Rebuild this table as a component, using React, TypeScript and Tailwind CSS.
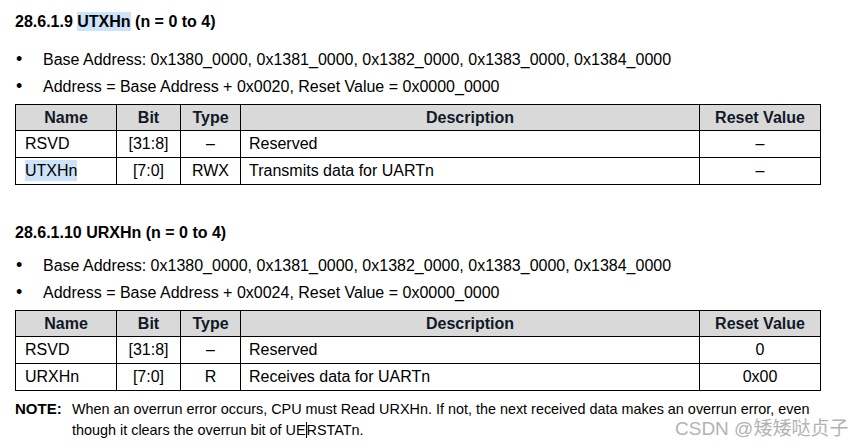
type Row = { name: string; bit: string; type: string; desc: string; reset: string; hl?: boolean };

const utxRows: Row[] = [
  { name: "RSVD", bit: "[31:8]", type: "–", desc: "Reserved", reset: "–" },
  { name: "UTXHn", bit: "[7:0]", type: "RWX", desc: "Transmits data for UARTn", reset: "–", hl: true },
];

const urxRows: Row[] = [
  { name: "RSVD", bit: "[31:8]", type: "–", desc: "Reserved", reset: "0" },
  { name: "URXHn", bit: "[7:0]", type: "R", desc: "Receives data for UARTn", reset: "0x00" },
];

function Bullets({ offset, className }: { offset: string; className: string }) {
  return (
    <ul className={`${className} flex flex-col text-[16px] leading-[27px] text-black`}>
      <li className="flex">
        <span className="w-[28px] pl-[1px] text-[18px]">•</span>
        Base Address: 0x1380_0000, 0x1381_0000, 0x1382_0000, 0x1383_0000, 0x1384_0000
      </li>
      <li className="flex">
        <span className="w-[28px] pl-[1px] text-[18px]">•</span>
        Address = Base Address + {offset}, Reset Value = 0x0000_0000
      </li>
    </ul>
  );
}

function RegTable({ rows }: { rows: Row[] }) {
  const th = "border border-black bg-[#d9d9d9] font-bold text-[#111827] h-[26px] text-center";
  const td = "border border-black h-[27px]";
  return (
    <table className="mt-[4px] w-[805px] border-collapse table-fixed text-[16px] leading-none text-black">
      <colgroup>
        <col className="w-[101px]" />
        <col className="w-[64px]" />
        <col className="w-[60px]" />
        <col className="w-[459px]" />
        <col className="w-[121px]" />
      </colgroup>
      <thead>
        <tr>
          <th className={th}>Name</th>
          <th className={th}>Bit</th>
          <th className={th}>Type</th>
          <th className={th}>Description</th>
          <th className={th}>Reset Value</th>
        </tr>
      </thead>
      <tbody>
        {rows.map((r) => (
          <tr key={r.name}>
            <td className={`${td} pl-[9px]`}>
              <span className={r.hl ? "bg-[#cce3f9] py-[2px]" : ""}>{r.name}</span>
            </td>
            <td className={`${td} text-center`}>{r.bit}</td>
            <td className={`${td} text-center`}>{r.type}</td>
            <td className={`${td} pl-[8px]`}>{r.desc}</td>
            <td className={`${td} text-center`}>{r.reset}</td>
          </tr>
        ))}
      </tbody>
    </table>
  );
}

export default function App() {
  return (
    <div className="relative w-[861px] h-[448px] overflow-hidden bg-white font-['Liberation_Sans',Arial,sans-serif]">
      <div className="flex flex-col pl-[15px] pt-[13px]">
        <h2 className="text-[16px] font-bold leading-[18px] text-black">
          28.6.1.9 <span className="bg-[#cce3f9] py-[1px]">UTXHn</span> (n = 0 to 4)
        </h2>
        <Bullets offset="0x0020" className="mt-[15px]" />
        <RegTable rows={utxRows} />

        <h2 className="mt-[39px] text-[16px] font-bold leading-[18px] text-black">28.6.1.10 URXHn (n = 0 to 4)</h2>
        <Bullets offset="0x0024" className="mt-[10px]" />
        <RegTable rows={urxRows} />

        <div className="mt-[8px] flex text-[14.4px] leading-[20px] text-black">
          <span className="w-[57px] shrink-0 text-[15px] font-bold">NOTE:</span>
          <p className="w-[780px]">
            When an overrun error occurs, CPU must Read URXHn. If not, the next received data makes an overrun error, even
            <br />
            though it clears the overrun bit of UE
            <span className="inline-block h-[16px] w-[1px] translate-y-[3px] bg-black" />
            RSTATn.
          </p>
        </div>
      </div>

      <div className="absolute left-[675px] top-[417px] text-[19px] leading-[24px] text-[#b3b3b3] font-['Liberation_Sans','Noto_Sans_CJK_SC',sans-serif]">
        CSDN @矮矮哒贞子
      </div>
    </div>
  );
}
